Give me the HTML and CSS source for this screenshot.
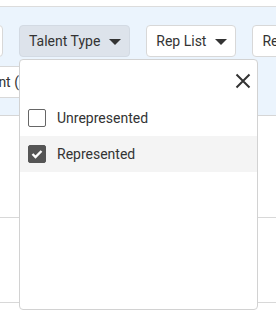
FILE: index.html
```html
<!DOCTYPE html>
<html lang="en">
<head>
    <meta charset="UTF-8">
    <meta name="viewport" content="width=device-width, initial-scale=1.0">
    <title>Talent Filters</title>
    <link rel="stylesheet" href="styles.css">
</head>
<body>

<div class="top-strip"></div>

<div class="filters">
    <div class="filter-row">
        <button class="filter-btn plain first">Search</button>
        <button class="filter-btn active">Talent Type <span class="caret"></span></button>
        <button class="filter-btn plain">Rep List <span class="caret"></span></button>
        <button class="filter-btn plain">Region <span class="caret"></span></button>
    </div>
    <div class="search-row">
        <div class="search-box">Search by talent (0)</div>
    </div>
</div>

<div class="table">
    <div class="table-row tall"></div>
    <div class="table-row"></div>
</div>

<!-- Talent Type dropdown -->
<div class="dropdown">
    <div class="dropdown-head">
        <button class="close-btn" aria-label="Close">
            <svg width="16" height="16" viewBox="0 0 16 16">
                <path d="M1.5 1.5 L14.5 14.5 M14.5 1.5 L1.5 14.5" stroke="#333" stroke-width="2" fill="none"/>
            </svg>
        </button>
    </div>
    <label class="option">
        <span class="check"></span>
        Unrepresented
    </label>
    <label class="option selected">
        <span class="check checked">
            <svg width="12" height="10" viewBox="0 0 12 10">
                <path d="M1.5 5 L4.5 8 L10.5 2" stroke="#fff" stroke-width="2.4" fill="none"/>
            </svg>
        </span>
        Represented
    </label>
</div>

</body>
</html>
```

FILE: styles.css
```css
body {
    margin: 0;
    font-family: Roboto, 'Liberation Sans', sans-serif;
    color: #333;
    background-color: #fff;
    position: relative;
    height: 332px;
    overflow: hidden;
}

.top-strip {
    height: 6px;
    border-bottom: 1px solid #dcdcdc;
}

.filters {
    background-color: #ebf4fd;
    padding: 18px 0 17px;
    border-bottom: 1px solid #d6d6d6;
    overflow: hidden;
}

.filter-row {
    display: flex;
    gap: 16px;
    white-space: nowrap;
}

.filter-btn {
    flex: none;
    height: 32px;
    padding: 0 8px 0 9px;
    display: flex;
    align-items: center;
    gap: 9px;
    font-family: inherit;
    font-size: 14px;
    color: #333;
    border-radius: 4px;
    cursor: pointer;
}

.filter-btn.plain {
    background-color: #fff;
    border: 1px solid #d8d8d8;
}

.filter-btn.active {
    background-color: #dde3eb;
    border: 1px solid #d3dae3;
}

.filter-btn.first {
    width: 80px;
    margin-left: -77px;
}

.caret {
    width: 0;
    height: 0;
    margin-top: 1px;
    border-left: 6px solid transparent;
    border-right: 6px solid transparent;
    border-top: 6px solid #333;
}

.search-row {
    margin-top: 9px;
    overflow: hidden;
}

.search-box {
    height: 30px;
    width: 300px;
    margin-left: -100px;
    background-color: #fff;
    border: 1px solid #d8d8d8;
    line-height: 30px;
    padding-left: 10px;
    font-size: 14px;
}

.table-row {
    height: 84px;
    border-bottom: 1px solid #d8d8d8;
}

.table-row.tall {
    height: 101px;
    border-bottom: 1px solid #d8d8d8;
}

.dropdown {
    position: absolute;
    top: 59px;
    left: 19px;
    width: 237px;
    height: 249px;
    background-color: #fff;
    border: 1px solid #d2d2d2;
    border-radius: 4px;
}

.dropdown-head {
    height: 40px;
    display: flex;
    justify-content: flex-end;
    align-items: center;
}

.close-btn {
    background: none;
    border: none;
    padding: 0;
    margin-right: 6px;
    margin-top: 1px;
    width: 16px;
    height: 16px;
    cursor: pointer;
}

.option {
    height: 36px;
    display: flex;
    align-items: center;
    gap: 11px;
    padding-left: 8px;
    font-size: 14px;
    color: #333;
}

.option.selected {
    background-color: #f4f4f4;
}

.check {
    width: 16px;
    height: 16px;
    border: 1px solid #666;
    border-radius: 2px;
    display: flex;
    align-items: center;
    justify-content: center;
}

.check.checked {
    background-color: #555;
    border-color: #555;
}
```
